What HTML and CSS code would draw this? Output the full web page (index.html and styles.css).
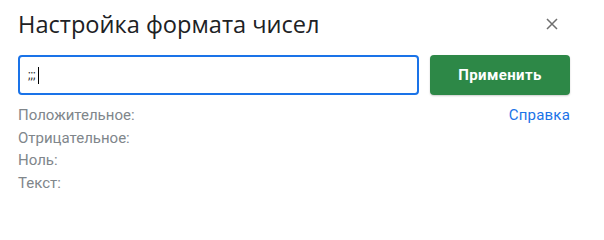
FILE: index.html
```html
<!DOCTYPE html>
<html lang="ru">
<head>
<meta charset="utf-8">
<link rel="stylesheet" href="styles.css">
</head>
<body>
<div class="dialog">
  <div class="header">
    <h1 class="title">Настройка формата чисел</h1>
    <button class="close" aria-label="Закрыть">
      <svg width="12" height="12" viewBox="0 0 12 12"><path d="M1 1L11 11M11 1L1 11" stroke="#6f6f6f" stroke-width="1.5" fill="none"/></svg>
    </button>
  </div>
  <div class="row">
    <div class="input"><span class="value">;;;</span><span class="caret"></span></div>
    <button class="apply">Применить</button>
  </div>
  <div class="info">
    <ul class="labels">
      <li>Положительное:</li>
      <li>Отрицательное:</li>
      <li>Ноль:</li>
      <li>Текст:</li>
    </ul>
    <a class="help" href="#">Справка</a>
  </div>
</div>
</body>
</html>
```
FILE: styles.css
```css
html, body {
  margin: 0;
  padding: 0;
  background: #ffffff;
}
.dialog {
  width: 552px;
  padding: 0 34px 0 18px;
  font-family: Roboto, "Noto Sans", sans-serif;
}
.header {
  display: flex;
  align-items: center;
  justify-content: space-between;
  height: 48px;
}
.title {
  margin: 0;
  font-family: "Open Sans", Roboto, sans-serif;
  font-weight: 400;
  font-size: 23.6px;
  color: #202124;
  letter-spacing: 0;
}
.close {
  border: none;
  background: none;
  padding: 0;
  width: 12px;
  height: 12px;
  margin-right: 12px;
  display: flex;
}
.row {
  display: flex;
  gap: 11px;
  margin-top: 7px;
}
.input {
  box-sizing: border-box;
  width: 401px;
  height: 40px;
  border: 2px solid #1a73e8;
  border-radius: 4px;
  display: flex;
  align-items: center;
  padding-left: 8px;
  font-size: 12px;
  color: #202124;
}
.caret {
  display: inline-block;
  width: 1px;
  height: 17px;
  background: #000;
  margin-left: 2px;
}
.apply {
  box-sizing: border-box;
  width: 140px;
  height: 40px;
  border: none;
  border-radius: 4px;
  background: #2d8847;
  color: #ffffff;
  font-family: Roboto, sans-serif;
  font-weight: 700;
  font-size: 15px;
  letter-spacing: 0.4px;
  box-shadow: 0 1px 2px rgba(0,0,0,0.2);
}
.info {
  display: flex;
  justify-content: space-between;
  align-items: flex-start;
  margin-top: 9px;
}
.labels {
  list-style: none;
  margin: 0;
  padding: 0;
  font-size: 15px;
  line-height: 22.5px;
  color: #80868b;
}
.help {
  font-size: 15px;
  line-height: 22.5px;
  color: #1a73e8;
  text-decoration: none;
  letter-spacing: 0.2px;
}
```
